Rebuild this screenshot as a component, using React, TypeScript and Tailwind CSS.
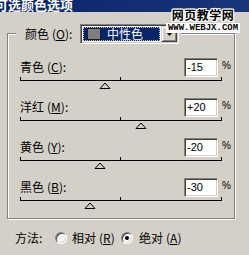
import React from "react";

const CJK = "font-['Noto_Sans_CJK_SC','Noto_Sans_CJK_JP',sans-serif]";

function Slider({ value }: { value: number }) {
  const center = 100.5 + (value / 100) * 100.5;
  return (
    <div className="relative h-[12px] w-[202px]">
      <div className="absolute left-0 right-0 top-[3px] h-px bg-black" />
      <div className="absolute left-0 top-0 h-[4px] w-px bg-black" />
      <div className="absolute left-[100px] top-0 h-[4px] w-px bg-black" />
      <div className="absolute right-0 top-0 h-[4px] w-px bg-black" />
      <svg
        className="absolute top-[5px]"
        style={{ left: Math.round(center) - 6 }}
        width="12"
        height="7"
        viewBox="0 0 12 7"
      >
        <path d="M1 6.5 L6 1 L11 6.5 Z" fill="#d4d0c8" stroke="#000" strokeWidth="1" />
      </svg>
    </div>
  );
}

function Field({ text }: { text: string }) {
  return (
    <div className="mt-[1px] flex h-[19px] w-[34px] items-center border border-t-[#808080] border-l-[#808080] border-b-white border-r-white bg-white pl-[2px] shadow-[inset_1px_1px_0_#404040,inset_-1px_-1px_0_#d4d0c8] font-['Liberation_Sans',sans-serif] text-[11px] leading-[11px] text-black">
      {text}
    </div>
  );
}

function Row({ name, key2, value, text }: { name: string; key2: string; value: number; text: string }) {
  return (
    <div className="h-[40px] pl-[12px]">
      <div className="flex items-start">
        <div className={`${CJK} mt-[1px] h-[19px] w-[164px] text-[12px] leading-[18px] text-black`}>
          {name}
          <span className="ml-[3px]">
            (<span className="underline underline-offset-[1px]">{key2}</span>):
          </span>
        </div>
        <Field text={text} />
        <div className="ml-[4px] mt-[3px] font-['Liberation_Sans',sans-serif] text-[10px] leading-[12px] text-black">%</div>
      </div>
      <Slider value={value} />
    </div>
  );
}

function Radio({ checked }: { checked?: boolean }) {
  return (
    <div className="flex h-[12px] w-[12px] items-center justify-center rounded-full border border-t-[#808080] border-l-[#808080] border-b-white border-r-white bg-white shadow-[inset_1px_1px_0_#404040,inset_-1px_-1px_0_#d4d0c8]">
      {checked && <div className="h-[4px] w-[4px] rounded-full bg-black" />}
    </div>
  );
}

export default function App() {
  return (
    <div className="relative h-[255px] w-[249px] overflow-hidden bg-[#d4d0c8] text-black">
      {/* Title bar */}
      <div className="h-[12px] overflow-hidden bg-gradient-to-r from-[#0a246a] to-[#18367c]">
        <div className={`${CJK} -ml-[5px] -mt-[2px] whitespace-nowrap text-[13px] font-bold leading-[14px] text-white`}>
          可选颜色选项
        </div>
      </div>

      {/* Group box */}
      <div className="ml-[7px] mt-[21px] flex h-[186px] w-[228px] flex-col border border-[#808080] shadow-[inset_1px_1px_0_#fff,1px_1px_0_#fff]">
        <div className="-mt-[10px] ml-[8px] flex h-[20px] w-fit items-center bg-[#d4d0c8] pr-[2px]">
          <div className={`${CJK} w-[64px] pl-[9px] text-[12px] leading-[14px]`}>
            颜色<span className="ml-[3px]">(<span className="underline underline-offset-[1px]">O</span>):</span>
          </div>
          <div className="flex h-[20px] w-[99px] border border-t-[#808080] border-l-[#808080] border-b-white border-r-white bg-white p-[1px] shadow-[inset_1px_1px_0_#404040,inset_-1px_-1px_0_#d4d0c8]">
            <div className="m-[1px] flex flex-1 items-center border border-dotted border-[#c8c8c8] bg-[#0a246a] pl-[3px]">
              <div className="h-[12px] w-[14px] border border-[#1a1a1a] bg-[#7f7f7f]" />
              <span className={`${CJK} ml-[6px] text-[12px] leading-[14px] text-white`}>中性色</span>
            </div>
            <div className="flex w-[16px] items-center justify-center border border-t-[#d4d0c8] border-l-[#d4d0c8] border-b-[#404040] border-r-[#404040] bg-[#d4d0c8] shadow-[inset_1px_1px_0_#fff,inset_-1px_-1px_0_#808080]">
              <svg width="7" height="4" viewBox="0 0 7 4">
                <path d="M0 0 H7 L3.5 4 Z" fill="#000" />
              </svg>
            </div>
          </div>
        </div>
        <div className="mt-[13px]">
          <Row name="青色" key2="C" value={-15} text="-15" />
          <Row name="洋红" key2="M" value={20} text="+20" />
          <Row name="黄色" key2="Y" value={-20} text="-20" />
          <Row name="黑色" key2="B" value={-30} text="-30" />
        </div>
      </div>

      {/* Method row */}
      <div className={`${CJK} mt-[11px] flex h-[16px] items-center pl-[15px] text-[12px] leading-[14px]`}>
        <span className="w-[40px]">方法:</span>
        <Radio />
        <span className="ml-[5px] w-[49px]">
          相对<span className="ml-[3px]">(<span className="underline underline-offset-[1px]">R</span>)</span>
        </span>
        <Radio checked />
        <span className="ml-[6px]">
          绝对<span className="ml-[3px]">(<span className="underline underline-offset-[1px]">A</span>)</span>
        </span>
      </div>

      {/* Watermark overlay */}
      <div className="absolute left-[166px] top-[8px] flex w-[74px] flex-col items-center">
        <div className={`${CJK} text-[12px] font-bold leading-[14px] tracking-[0.5px] text-black [text-shadow:1px_0_0_#fff,-1px_0_0_#fff,0_1px_0_#fff,0_-1px_0_#fff,1px_1px_0_#fff,-1px_-1px_0_#fff,1px_-1px_0_#fff,-1px_1px_0_#fff]`}>
          网页教学网
        </div>
        <div className="mt-[1px] flex h-[10px] w-[74px] items-center justify-center bg-white font-['Liberation_Mono',monospace] text-[9px] font-bold leading-[9px] text-black">
          WWW.WEBJX.COM
        </div>
      </div>
    </div>
  );
}
